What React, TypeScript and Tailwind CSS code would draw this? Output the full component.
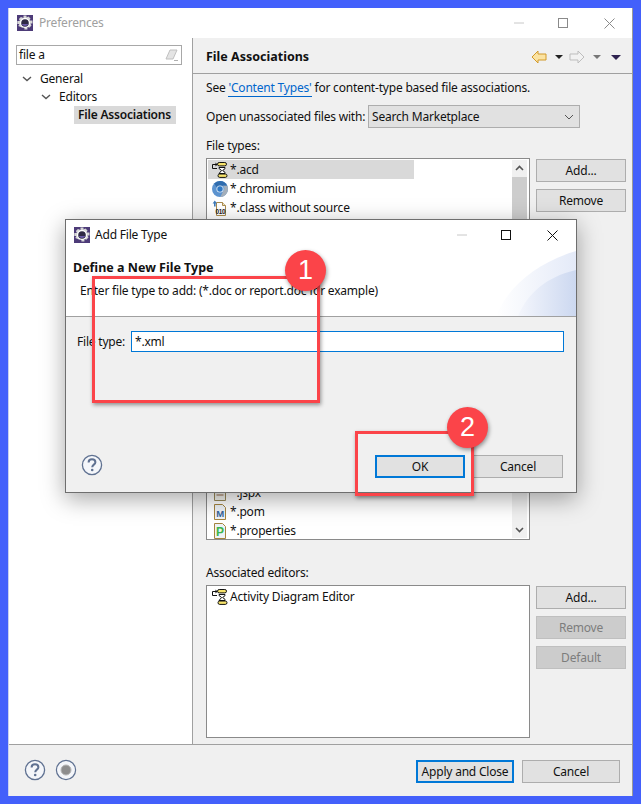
const Gear = ({ className = "" }: { className?: string }) => (
  <svg width="16" height="16" viewBox="0 0 16 16" className={className}>
    <rect x="0" y="0" width="16" height="16" fill="#4d3b78" />
    <path d="M6.5 0.5h3v2l2-.9 2 2-1 1.9h3v3h-2l1 2-2.2 2.2-1.9-1v2.8h-3v-2.8l-1.9 1L1.3 11l1-2h-2V6h2.6l-1-1.9 2-2 2.6.9z" fill="#d8d8d8" />
    <circle cx="8" cy="8" r="5" fill="#fff" />
    <circle cx="8" cy="8" r="3.8" fill="#2f2a45" />
    <path d="M4.6 9h6.8a3.8 3.8 0 0 1-6.8 0z" fill="#6a5aa8" />
  </svg>
);

const Help = () => (
  <svg width="22" height="22" viewBox="0 0 22 22" className="block">
    <circle cx="11" cy="11" r="9.6" fill="#f4f6fa" stroke="#5f7191" strokeWidth="1.3" />
    <path d="M7.6 8.4c0-2 1.5-3.1 3.4-3.1s3.4 1.1 3.4 2.9c0 2.4-3.2 2.5-3.2 5" fill="none" stroke="#5f7191" strokeWidth="2" />
    <circle cx="11.2" cy="16" r="1.3" fill="#5f7191" />
  </svg>
);

const ActivityIcon = () => (
  <svg width="16" height="16" viewBox="0 0 16 16" className="block shrink-0">
    <path d="M.5 2.5h3.5M.5 2.5v4h4.5" fill="none" stroke="#111" strokeWidth="1" />
    <path d="M3.5 .5l2 2-2 2z" fill="#111" />
    <rect x="5.5" y=".5" width="9" height="3.4" rx="1.7" fill="#f7e36b" stroke="#111" strokeWidth="1" />
    <path d="M7 5.5h6v1.2L10.6 8.5 13 10.3v1.2H7l2.6-3L7 6.5z" fill="#fff" stroke="#111" strokeWidth="1" />
    <rect x="6" y="12" width="9" height="3.4" rx="1.7" fill="#f7e36b" stroke="#111" strokeWidth="1" />
  </svg>
);

const ChromiumIcon = () => (
  <svg width="16" height="16" viewBox="0 0 16 16" className="block shrink-0">
    <circle cx="8" cy="8" r="8" fill="#5c93cf" />
    <path d="M8 0a8 8 0 0 1 7.3 4.8H8a3.3 3.3 0 0 0-3.1 2L2.2 2.6A8 8 0 0 1 8 0z" fill="#2f6cae" />
    <path d="M15.3 4.8A8 8 0 0 1 8.3 16l3.1-6.3a3.5 3.5 0 0 0-.6-4.9z" fill="#a4aeb9" />
    <circle cx="8" cy="8" r="3.6" fill="#d8e6f4" />
    <circle cx="8" cy="8" r="2.7" fill="#2f78c4" />
  </svg>
);

const ClassIcon = () => (
  <svg width="16" height="16" viewBox="0 0 16 16" className="block shrink-0">
    <path d="M4.5 2.5h6l3 3v10h-9z" fill="#fff" stroke="#a98a4b" />
    <path d="M10.5 2.5v3h3" fill="#f2e6c4" stroke="#a98a4b" />
    <path d="M2.8 .5L.6 3.4h1.4v3h1.6v-3H5z" fill="#3d78b8" />
    <text x="3.4" y="14" fontSize="6.4" fontWeight="700" fontFamily="'Liberation Sans', sans-serif" fill="#222">010</text>
  </svg>
);

const JspIcon = () => (
  <svg width="16" height="16" viewBox="0 0 16 16" className="block shrink-0">
    <path d="M2.5 .5h8l3 3v12h-11z" fill="#f4f4ee" stroke="#9a8a5a" />
    <path d="M4.5 5h7M4.5 7.5h7" stroke="#4a7a9a" />
    <path d="M4.5 10h7" stroke="#9a6a4a" />
  </svg>
);

const LetterIcon = ({ letter, color }: { letter: string; color: string }) => (
  <svg width="16" height="16" viewBox="0 0 16 16" className="block shrink-0">
    <path d="M2.5 .5h8l3 3v12h-11z" fill="#eef2f6" stroke="#a5843f" />
    <text x="8" y="12.6" textAnchor="middle" fontSize={letter === "M" ? "9.5" : "12"} fontWeight="700" fontFamily="'Liberation Sans', sans-serif" fill={color}>{letter}</text>
  </svg>
);

const Btn = ({ children, className = "w-[90px]" }: { children: React.ReactNode; className?: string }) => (
  <div className={`flex h-[23px] items-center justify-center border border-[#adadad] bg-[#e1e1e1] text-[#111] ${className}`}>
    {children}
  </div>
);

const Disabled = ({ children }: { children: React.ReactNode }) => (
  <div className="flex h-[23px] w-[90px] items-center justify-center border border-[#bfbfbf] bg-[#cccccc] text-[#7d7d7d]">
    {children}
  </div>
);

const Row = ({ icon, label, selected }: { icon: React.ReactNode; label: string; selected?: boolean }) => (
  <div className={`flex h-[19px] w-[206px] items-center gap-[2px] pl-[4px] ${selected ? "bg-[#d9d9d9]" : ""}`}>
    {icon}
    <span className="leading-none">{label}</span>
  </div>
);

const WindowControls = ({ dim }: { dim?: boolean }) => (
  <svg width="120" height="30" viewBox="0 0 120 30" className="block">
    <path d="M2 15h10" stroke="#c8c8c8" />
    <rect x="46.5" y="10.5" width="9" height="9" fill="none" stroke={dim ? "#8a8a8a" : "#111"} />
    <path d="M92.5 10.5l10 10M102.5 10.5l-10 10" stroke={dim ? "#8a8a8a" : "#111"} />
  </svg>
);

export default function App() {
  return (
    <div
      className="relative h-[804px] w-[641px] overflow-hidden bg-[#4360fb] pt-2 pr-2 pb-2 pl-2 text-[12px] tracking-[-0.2px] text-[#111]"
      style={{ fontFamily: "'Noto Sans', 'Open Sans', sans-serif" }}
    >
      <div className="flex h-full flex-col border-l border-r border-l-[#c9d0f0] border-r-[#9a9a9a] bg-white">
        {/* Title bar */}
        <div className="flex h-[30px] shrink-0 items-center justify-between pl-[8px]">
          <div className="flex items-center gap-[6px]">
            <Gear />
            <span className="text-[#a0a0a0]">Preferences</span>
          </div>
          <WindowControls dim />
        </div>

        {/* Body */}
        <div className="flex min-h-0 flex-1">
          {/* Left tree */}
          <div className="w-[183px] shrink-0 bg-white pt-[7px] pl-[7px]">
            <div className="flex h-[20px] w-[166px] items-center justify-between border border-[#a8a8a8] pr-[2px] pl-[2px]">
              <span>file a</span>
              <svg width="14" height="14" viewBox="0 0 14 14" className="block">
                <path d="M1 11l4-9h7l-4 9z" fill="#e4e4e4" stroke="#c0c0c0" />
                <path d="M9 12.5h4" stroke="#b0b0b0" />
              </svg>
            </div>
            <div className="mt-[5px] flex h-[18px] items-center pl-[6px]">
              <svg width="10" height="10" viewBox="0 0 10 10" className="mr-[8px]"><path d="M1 3l4 3.6L9 3" fill="none" stroke="#555" strokeWidth="1.4" /></svg>
              General
            </div>
            <div className="flex h-[18px] items-center pl-[25px]">
              <svg width="10" height="10" viewBox="0 0 10 10" className="mr-[8px]"><path d="M1 3l4 3.6L9 3" fill="none" stroke="#555" strokeWidth="1.4" /></svg>
              Editors
            </div>
            <div className="ml-[58px] flex h-[18px] w-[102px] items-center bg-[#d9d9d9] pl-[4px] font-semibold whitespace-nowrap">
              File Associations
            </div>
          </div>

          {/* Right page */}
          <div className="flex min-w-0 flex-1 flex-col border-l border-[#a0a0a0] bg-[#f0f0f0]">
            <div className="flex h-[36px] shrink-0 items-center justify-between border-b border-[#a0a0a0] pt-[4px] pr-[9px] pl-[13px]">
              <span className="text-[12.5px] font-bold tracking-normal">File Associations</span>
              <svg width="92" height="18" viewBox="0 0 92 18" className="mb-[2px] block">
                <path d="M1 9l6-6v3h8v6H7v3z" fill="#fbe3a2" stroke="#d29a2a" strokeWidth="1" />
                <path d="M24 7h8l-4 4z" fill="#222" />
                <path d="M53 9l-6-6v3h-8v6h8v3z" fill="#f2f2f2" stroke="#bdbdbd" strokeWidth="1" />
                <path d="M62 7h8l-4 4z" fill="#777" />
                <path d="M80 7h10l-5 5z" fill="#2f2350" />
              </svg>
            </div>
            <div className="flex min-h-0 flex-1 flex-col pt-[6px] pl-[13px]">
              <div className="h-[16px] leading-[16px] whitespace-nowrap">
                See <span className="border-b border-[#0066cc] text-[#0066cc]">'Content Types'</span> for content-type based file associations.
              </div>
              <div className="mt-[9px] flex h-[23px] items-center">
                <span className="w-[162px] whitespace-nowrap">Open unassociated files with:</span>
                <div className="flex h-[23px] w-[212px] items-center justify-between border border-[#adadad] bg-[#e1e1e1] pr-[5px] pl-[3px]">
                  <span>Search Marketplace</span>
                  <svg width="10" height="10" viewBox="0 0 10 10"><path d="M1 3l4 4 4-4" fill="none" stroke="#555" /></svg>
                </div>
              </div>
              <div className="mt-[9px] h-[17px] leading-[17px]">File types:</div>
              <div className="mt-[4px] flex gap-[6px]">
                <div className="relative h-[382px] w-[324px] border border-[#8a8a8a] bg-white pt-px pl-px">
                  <Row icon={<ActivityIcon />} label="*.acd" selected />
                  <Row icon={<ChromiumIcon />} label="*.chromium" />
                  <Row icon={<ClassIcon />} label="*.class without source" />
                  <div className="h-[266px]" />
                  <Row icon={<JspIcon />} label="*.jspx" />
                  <Row icon={<LetterIcon letter="M" color="#35639a" />} label="*.pom" />
                  <Row icon={<LetterIcon letter="P" color="#3cb54a" />} label="*.properties" />
                  <div className="absolute top-px right-[2px] bottom-px flex w-[15px] flex-col bg-[#f0f0f0]">
                    <div className="flex h-[17px] items-center justify-center">
                      <svg width="9" height="7" viewBox="0 0 9 7"><path d="M1 5l3.5-3.5L8 5" fill="none" stroke="#555" strokeWidth="1.6" /></svg>
                    </div>
                    <div className="h-[200px] bg-[#cdcdcd]" />
                    <div className="flex-1" />
                    <div className="flex h-[17px] items-center justify-center">
                      <svg width="9" height="7" viewBox="0 0 9 7"><path d="M1 2l3.5 3.5L8 2" fill="none" stroke="#555" strokeWidth="1.6" /></svg>
                    </div>
                  </div>
                </div>
                <div className="flex flex-col gap-[7px] pt-px">
                  <Btn>Add...</Btn>
                  <Btn>Remove</Btn>
                </div>
              </div>
              <div className="mt-[24px] h-[17px] leading-[17px]">Associated editors:</div>
              <div className="mt-[4px] flex gap-[6px]">
                <div className="h-[153px] w-[324px] border border-[#8a8a8a] bg-white pt-px pl-px">
                  <div className="flex h-[19px] items-center gap-[2px] pl-[4px]">
                    <ActivityIcon />
                    <span>Activity Diagram Editor</span>
                  </div>
                </div>
                <div className="flex flex-col gap-[7px] pt-px">
                  <Btn>Add...</Btn>
                  <Disabled>Remove</Disabled>
                  <Disabled>Default</Disabled>
                </div>
              </div>
            </div>
          </div>
        </div>

        {/* Footer */}
        <div className="flex h-[52px] shrink-0 items-center justify-between border-t border-[#a0a0a0] bg-[#f0f0f0] pr-[12px] pl-[15px]">
          <div className="mb-[2px] flex items-center gap-[9px]">
            <Help />
            <svg width="22" height="22" viewBox="0 0 22 22" className="block">
              <circle cx="11" cy="11" r="9.6" fill="#f4f6fa" stroke="#5f7191" strokeWidth="1.2" />
              <circle cx="11" cy="11" r="5" fill="#8d8d8d" stroke="#b5b5b5" />
            </svg>
          </div>
          <div className="flex items-center gap-[8px] pt-[2px]">
            <div className="flex h-[23px] w-[98px] items-center justify-center border-2 border-[#0078d7] bg-[#e1e1e1]">Apply and Close</div>
            <Btn className="w-[98px]">Cancel</Btn>
          </div>
        </div>
      </div>

      {/* Modal dialog */}
      <div className="absolute top-[219px] left-[65px] flex h-[274px] w-[512px] flex-col border border-[#6e6e6e] bg-[#f0f0f0] shadow-[0_6px_22px_rgba(0,0,0,0.35)]">
        <div className="flex h-[30px] shrink-0 items-center justify-between bg-white pr-px pl-[8px]">
          <div className="flex items-center gap-[5px]">
            <Gear />
            <span>Add File Type</span>
          </div>
          <WindowControls />
        </div>
        <div className="relative h-[67px] shrink-0 overflow-hidden border-b border-[#a0a0a0] bg-white pl-[7px]">
          <svg width="80" height="67" viewBox="0 0 80 67" className="absolute right-0 bottom-0 block">
            <defs>
              <linearGradient id="g1" x1="0" x2="1" y1="0" y2="0">
                <stop offset="0" stopColor="#ffffff" />
                <stop offset="1" stopColor="#e4eaf8" />
              </linearGradient>
              <linearGradient id="g2" x1="0" x2="1" y1="0" y2="0">
                <stop offset="0" stopColor="#f4f6fc" />
                <stop offset="1" stopColor="#ccd8f0" />
              </linearGradient>
            </defs>
            <path d="M0 67C12 38 40 14 80 2V67z" fill="url(#g1)" />
            <path d="M22 67C32 44 50 28 80 21V67z" fill="url(#g2)" />
          </svg>
          <div className="relative pt-[9px] text-[12.5px] font-bold tracking-normal whitespace-nowrap">Define a New File Type</div>
          <div className="relative mt-[4px] pl-[7px] whitespace-nowrap">Enter file type to add: (*.doc or report.doc for example)</div>
        </div>
        <div className="flex items-center pt-[14px] pr-[12px] pl-[11px]">
          <span className="w-[54px]">File type:</span>
          <div className="flex h-[21px] flex-1 items-center border border-[#0078d7] bg-white pl-[3px]">*.xml</div>
        </div>
        <div className="flex flex-1 items-end justify-between pr-[13px] pb-[14px] pl-[15px]">
          <div className="mb-[2px]"><Help /></div>
          <div className="flex gap-[8px]">
            <div className="flex h-[23px] w-[90px] items-center justify-center border-2 border-[#0078d7] bg-[#e1e1e1]">OK</div>
            <Btn>Cancel</Btn>
          </div>
        </div>
      </div>

      {/* Annotations */}
      <div className="absolute top-[276px] left-[92px] h-[127px] w-[228px] border-[3px] border-[#fb4449] shadow-[1px_2px_4px_rgba(0,0,0,0.4)]" />
      <div className="absolute top-[250px] left-[285px] flex h-[41px] w-[41px] items-center justify-center rounded-full bg-[#fb4449] text-[27px] text-white shadow-[1px_2px_4px_rgba(0,0,0,0.4)]" style={{ fontFamily: "'Liberation Sans', sans-serif" }}>1</div>
      <div className="absolute top-[431px] left-[355px] h-[65px] w-[119px] border-[3px] border-[#fb4449] shadow-[1px_2px_4px_rgba(0,0,0,0.4)]" />
      <div className="absolute top-[407px] left-[447px] flex h-[41px] w-[41px] items-center justify-center rounded-full bg-[#fb4449] text-[27px] text-white shadow-[1px_2px_4px_rgba(0,0,0,0.4)]" style={{ fontFamily: "'Liberation Sans', sans-serif" }}>2</div>
    </div>
  );
}
